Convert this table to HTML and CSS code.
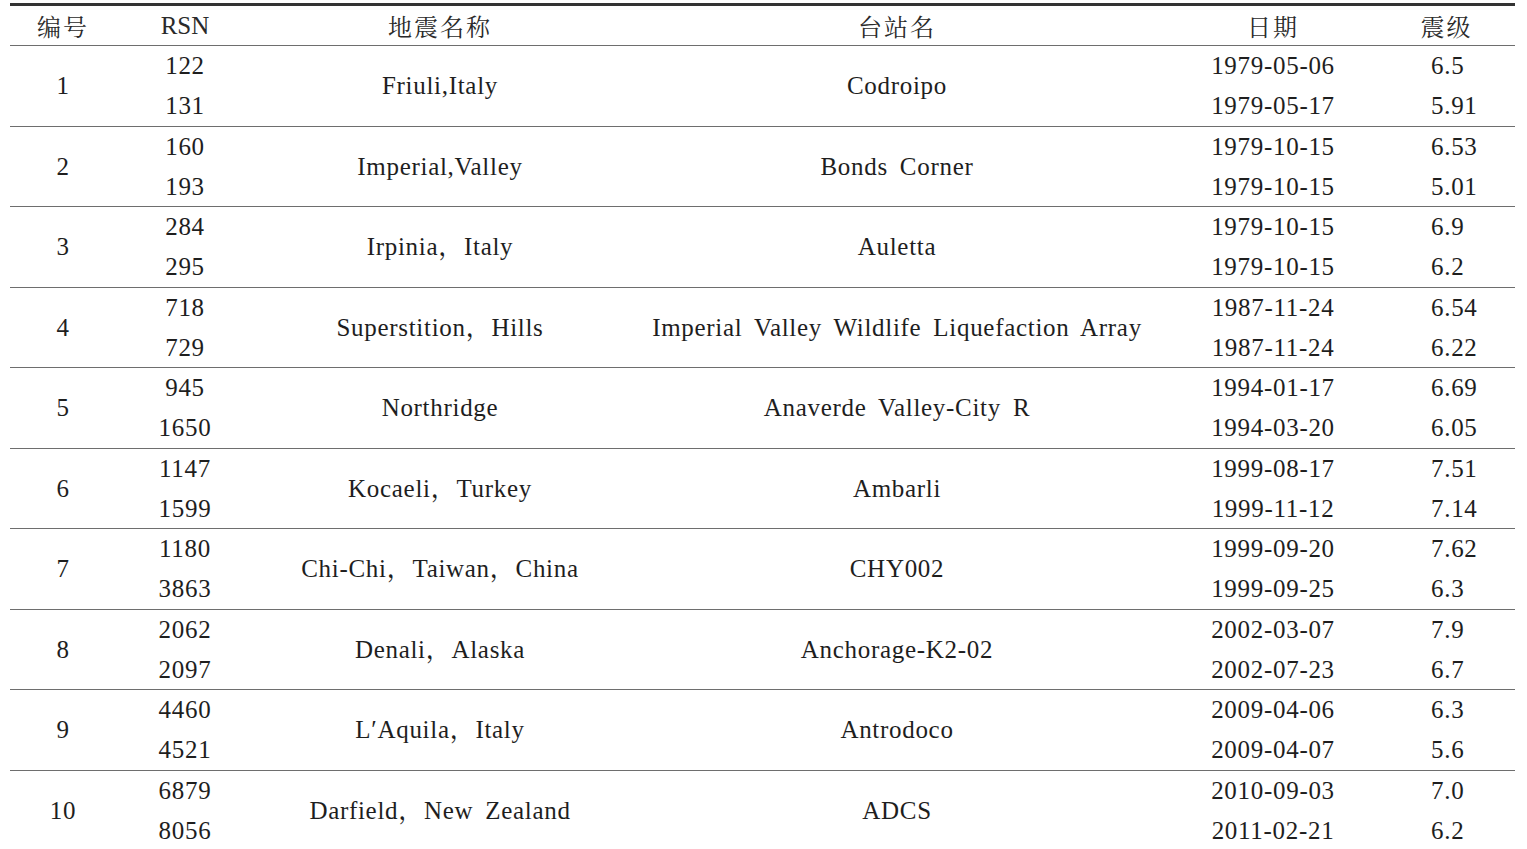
FILE: index.html
```html
<!DOCTYPE html>
<html lang="zh">
<head>
<meta charset="utf-8">
<title>地震动记录表</title>
<link rel="stylesheet" href="styles.css">
</head>
<body>
<div class="table">
  <div class="head">
    <div class="cell">编号</div>
    <div class="cell rsn-h">RSN</div>
    <div class="cell">地震名称</div>
    <div class="cell">台站名</div>
    <div class="cell">日期</div>
    <div class="cell">震级</div>
  </div>

  <div class="group">
    <div class="cell num">1</div>
    <div class="cell r1 c2">122</div>
    <div class="cell name">Friuli,Italy</div>
    <div class="cell station">Codroipo</div>
    <div class="cell r1 c5">1979-05-06</div>
    <div class="cell r1 c6 mag">6.5</div>
    <div class="cell r2 c2">131</div>
    <div class="cell r2 c5">1979-05-17</div>
    <div class="cell r2 c6 mag">5.91</div>
  </div>

  <div class="group">
    <div class="cell num">2</div>
    <div class="cell r1 c2">160</div>
    <div class="cell name">Imperial,Valley</div>
    <div class="cell station">Bonds Corner</div>
    <div class="cell r1 c5">1979-10-15</div>
    <div class="cell r1 c6 mag">6.53</div>
    <div class="cell r2 c2">193</div>
    <div class="cell r2 c5">1979-10-15</div>
    <div class="cell r2 c6 mag">5.01</div>
  </div>

  <div class="group">
    <div class="cell num">3</div>
    <div class="cell r1 c2">284</div>
    <div class="cell name">Irpinia，Italy</div>
    <div class="cell station">Auletta</div>
    <div class="cell r1 c5">1979-10-15</div>
    <div class="cell r1 c6 mag">6.9</div>
    <div class="cell r2 c2">295</div>
    <div class="cell r2 c5">1979-10-15</div>
    <div class="cell r2 c6 mag">6.2</div>
  </div>

  <div class="group">
    <div class="cell num">4</div>
    <div class="cell r1 c2">718</div>
    <div class="cell name">Superstition，Hills</div>
    <div class="cell station">Imperial Valley Wildlife Liquefaction Array</div>
    <div class="cell r1 c5">1987-11-24</div>
    <div class="cell r1 c6 mag">6.54</div>
    <div class="cell r2 c2">729</div>
    <div class="cell r2 c5">1987-11-24</div>
    <div class="cell r2 c6 mag">6.22</div>
  </div>

  <div class="group">
    <div class="cell num">5</div>
    <div class="cell r1 c2">945</div>
    <div class="cell name">Northridge</div>
    <div class="cell station">Anaverde Valley-City R</div>
    <div class="cell r1 c5">1994-01-17</div>
    <div class="cell r1 c6 mag">6.69</div>
    <div class="cell r2 c2">1650</div>
    <div class="cell r2 c5">1994-03-20</div>
    <div class="cell r2 c6 mag">6.05</div>
  </div>

  <div class="group">
    <div class="cell num">6</div>
    <div class="cell r1 c2">1147</div>
    <div class="cell name">Kocaeli，Turkey</div>
    <div class="cell station">Ambarli</div>
    <div class="cell r1 c5">1999-08-17</div>
    <div class="cell r1 c6 mag">7.51</div>
    <div class="cell r2 c2">1599</div>
    <div class="cell r2 c5">1999-11-12</div>
    <div class="cell r2 c6 mag">7.14</div>
  </div>

  <div class="group">
    <div class="cell num">7</div>
    <div class="cell r1 c2">1180</div>
    <div class="cell name">Chi-Chi，Taiwan，China</div>
    <div class="cell station">CHY002</div>
    <div class="cell r1 c5">1999-09-20</div>
    <div class="cell r1 c6 mag">7.62</div>
    <div class="cell r2 c2">3863</div>
    <div class="cell r2 c5">1999-09-25</div>
    <div class="cell r2 c6 mag">6.3</div>
  </div>

  <div class="group">
    <div class="cell num">8</div>
    <div class="cell r1 c2">2062</div>
    <div class="cell name">Denali，Alaska</div>
    <div class="cell station">Anchorage-K2-02</div>
    <div class="cell r1 c5">2002-03-07</div>
    <div class="cell r1 c6 mag">7.9</div>
    <div class="cell r2 c2">2097</div>
    <div class="cell r2 c5">2002-07-23</div>
    <div class="cell r2 c6 mag">6.7</div>
  </div>

  <div class="group">
    <div class="cell num">9</div>
    <div class="cell r1 c2">4460</div>
    <div class="cell name">L′Aquila，Italy</div>
    <div class="cell station">Antrodoco</div>
    <div class="cell r1 c5">2009-04-06</div>
    <div class="cell r1 c6 mag">6.3</div>
    <div class="cell r2 c2">4521</div>
    <div class="cell r2 c5">2009-04-07</div>
    <div class="cell r2 c6 mag">5.6</div>
  </div>

  <div class="group">
    <div class="cell num">10</div>
    <div class="cell r1 c2">6879</div>
    <div class="cell name">Darfield，New Zealand</div>
    <div class="cell station">ADCS</div>
    <div class="cell r1 c5">2010-09-03</div>
    <div class="cell r1 c6 mag">7.0</div>
    <div class="cell r2 c2">8056</div>
    <div class="cell r2 c5">2011-02-21</div>
    <div class="cell r2 c6 mag">6.2</div>
  </div>
</div>
</body>
</html>
```

FILE: styles.css
```css
html, body {
  margin: 0;
  padding: 0;
  background: #ffffff;
}

body {
  font-family: "Liberation Serif", "Noto Serif CJK SC", "Noto Sans CJK SC", serif;
  font-size: 25px;
  color: #1e1e1e;
  letter-spacing: 0.7px;
  word-spacing: 5px;
  overflow: hidden;
}

.table {
  width: 1505px;
  margin: 3px 0 0 10px;
  border-top: 3px solid #333333;
}

.head,
.group {
  display: grid;
  grid-template-columns: 106px 138px 372px 542px 210px 137px;
}

.head {
  height: 39px;
  grid-template-rows: 39px;
}

.group {
  height: 79.5px;
  grid-template-rows: 39.75px 39.75px;
  border-top: 1px solid #6e6e6e;
}

.cell {
  display: flex;
  align-items: center;
  justify-content: center;
  white-space: nowrap;
  line-height: 1;
}

.head .cell {
  font-family: "Noto Serif CJK SC", "Noto Sans CJK SC", "Liberation Serif", serif;
  font-size: 24px;
  letter-spacing: 2px;
  color: #2a2a2a;
}

.head .rsn-h {
  font-family: "Liberation Serif", serif;
  font-size: 25px;
  letter-spacing: 0;
}

.num { grid-column: 1; grid-row: 1 / 3; }
.name { grid-column: 3; grid-row: 1 / 3; }
.station { grid-column: 4; grid-row: 1 / 3; }
.r1 { grid-row: 1; }
.r2 { grid-row: 2; }
.c2 { grid-column: 2; }
.c5 { grid-column: 5; }
.c6 { grid-column: 6; }

.mag {
  justify-content: flex-start;
  padding-left: 53px;
}
```
